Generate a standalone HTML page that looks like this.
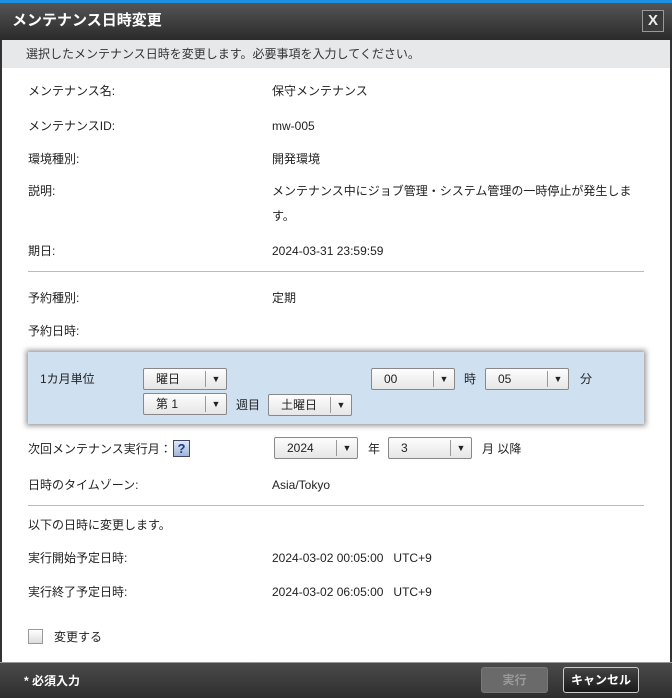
<!DOCTYPE html>
<html><head><meta charset="utf-8"><style>
*{box-sizing:border-box;margin:0;padding:0}
body{width:672px;height:698px;overflow:hidden;font-family:"Liberation Sans","Noto Sans CJK JP",sans-serif;font-size:12px;color:#222;background:#fff;position:relative}
.frame{position:absolute;left:0;top:0;width:672px;height:698px;border-left:2px solid #333;border-right:2px solid #333}
.title{position:absolute;left:0;top:0;width:672px;height:40px;background:linear-gradient(#555,#2a2a2a);border-top:3px solid #1e90e0;color:#fff;font-size:15px;font-weight:bold;padding:8px 0 0 12px;line-height:20px}
.close{position:absolute;right:8px;top:7px;width:22px;height:22px;border:1px solid #999;background:#3a3a3a;color:#eee;font-size:15px;text-align:center;line-height:20px;font-weight:bold}
.info{position:absolute;left:2px;top:40px;width:668px;height:28px;background:#e6e8ea;padding:6px 0 0 24px;color:#333;line-height:16px}
.t{position:absolute;white-space:nowrap;line-height:16px;height:16px}
.hr{position:absolute;left:28px;width:616px;height:1px;background:#bbb}
.panel{position:absolute;left:28px;top:352px;width:616px;height:72px;background:#cfe0f1;box-shadow:0 0 5px 2px #999}
.sel{position:absolute;height:22px;border:1px solid #888;border-radius:2px;background:linear-gradient(#fdfdfd,#e6e6e6);padding:0 0 0 12px;line-height:20px;font-size:12px}
.sel:after{content:"▼";position:absolute;right:0;top:2px;width:20px;height:16px;border-left:1px solid #999;font-size:9px;text-align:center;line-height:16px;color:#222}
.help{position:absolute;left:173px;top:440px;width:17px;height:17px;border:1px solid #446;background:linear-gradient(#dfe8f6,#9fb6da);color:#1b3a8a;font-weight:bold;font-size:13px;text-align:center;line-height:15px}
.cb{position:absolute;left:28px;top:629px;width:15px;height:15px;border:1px solid #999;background:linear-gradient(#fff,#ddd)}
.foot{position:absolute;left:0;top:662px;width:672px;height:36px;background:linear-gradient(#4a4a4a,#2e2e2e);border-top:1px solid #999}
.btn{position:absolute;top:4px;height:26px;border-radius:3px;text-align:center;line-height:24px;font-size:12px;font-weight:bold}
</style></head><body>
<div class="frame"></div>
<div class="title">メンテナンス日時変更<div class="close">X</div></div>
<div class="info">選択したメンテナンス日時を変更します。必要事項を入力してください。</div>
<div class="t" style="left:28px;top:83px">メンテナンス名:</div><div class="t" style="left:272px;top:83px">保守メンテナンス</div>
<div class="t" style="left:28px;top:118px">メンテナンスID:</div><div class="t" style="left:272px;top:118px">mw-005</div>
<div class="t" style="left:28px;top:151px">環境種別:</div><div class="t" style="left:272px;top:151px">開発環境</div>
<div class="t" style="left:28px;top:183px">説明:</div><div class="t" style="left:272px;top:179px;line-height:25px;white-space:normal;width:375px;height:auto">メンテナンス中にジョブ管理・システム管理の一時停止が発生します。</div>
<div class="t" style="left:28px;top:243px">期日:</div><div class="t" style="left:272px;top:243px">2024-03-31 23:59:59</div>
<div class="hr" style="top:271px"></div>
<div class="t" style="left:28px;top:290px">予約種別:</div><div class="t" style="left:272px;top:290px">定期</div>
<div class="t" style="left:28px;top:323px">予約日時:</div>
<div class="panel"></div>
<div class="t" style="left:40px;top:371px">1カ月単位</div>
<div class="sel" style="left:143px;top:368px;width:84px">曜日</div>
<div class="sel" style="left:143px;top:393px;width:84px">第 1</div>
<div class="t" style="left:236px;top:397px">週目</div>
<div class="sel" style="left:268px;top:394px;width:84px">土曜日</div>
<div class="sel" style="left:371px;top:368px;width:84px">00</div>
<div class="t" style="left:464px;top:371px">時</div>
<div class="sel" style="left:485px;top:368px;width:84px">05</div>
<div class="t" style="left:580px;top:371px">分</div>
<div class="t" style="left:28px;top:441px">次回メンテナンス実行月：</div><div class="help">?</div>
<div class="sel" style="left:274px;top:437px;width:84px">2024</div>
<div class="t" style="left:368px;top:441px">年</div>
<div class="sel" style="left:388px;top:437px;width:84px">3</div>
<div class="t" style="left:482px;top:441px">月 以降</div>
<div class="t" style="left:28px;top:477px">日時のタイムゾーン:</div><div class="t" style="left:272px;top:477px">Asia/Tokyo</div>
<div class="hr" style="top:505px"></div>
<div class="t" style="left:28px;top:517px">以下の日時に変更します。</div>
<div class="t" style="left:28px;top:550px">実行開始予定日時:</div><div class="t" style="left:272px;top:550px">2024-03-02 00:05:00&nbsp;&nbsp;&nbsp;UTC+9</div>
<div class="t" style="left:28px;top:584px">実行終了予定日時:</div><div class="t" style="left:272px;top:584px">2024-03-02 06:05:00&nbsp;&nbsp;&nbsp;UTC+9</div>
<div class="cb"></div><div class="t" style="left:54px;top:629px">変更する</div>
<div class="foot">
<div class="t" style="left:24px;top:10px;color:#fff;font-weight:bold">* 必須入力</div>
<div class="btn" style="left:481px;width:67px;background:#6a6a6a;color:#999;border:1px solid #777">実行</div>
<div class="btn" style="left:563px;width:76px;background:linear-gradient(#444,#1a1a1a);color:#fff;border:1px solid #ccc">キャンセル</div>
</div>
</body></html>
